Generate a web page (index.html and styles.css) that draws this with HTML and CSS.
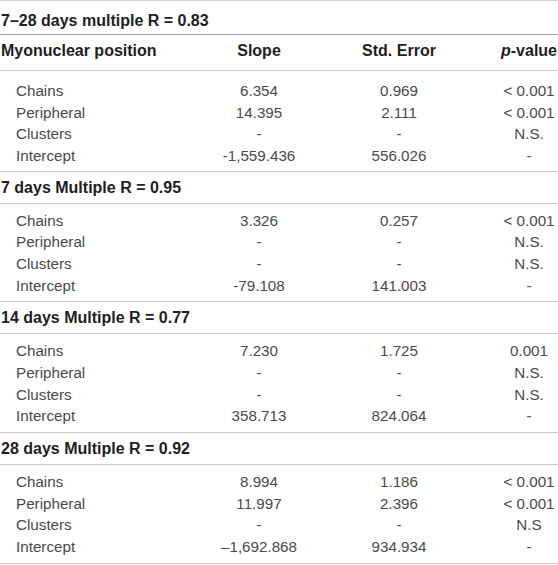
FILE: index.html
```html
<!DOCTYPE html>
<html>
<head>
<meta charset="utf-8">
<link rel="stylesheet" href="styles.css">
</head>
<body>
<div class="tbl">
  <div class="title first">7–28 days multiple R = 0.83</div>
  <div class="head">
    <span class="c1">Myonuclear position</span>
    <span>Slope</span>
    <span>Std. Error</span>
    <span><i>p</i>-value</span>
  </div>
  <div class="block b1">
    <div class="row"><span class="c1">Chains</span><span>6.354</span><span>0.969</span><span>&lt; 0.001</span></div>
    <div class="row"><span class="c1">Peripheral</span><span>14.395</span><span>2.111</span><span>&lt; 0.001</span></div>
    <div class="row"><span class="c1">Clusters</span><span>-</span><span>-</span><span>N.S.</span></div>
    <div class="row"><span class="c1">Intercept</span><span>-1,559.436</span><span>556.026</span><span>-</span></div>
  </div>
  <div class="title">7 days Multiple R = 0.95</div>
  <div class="block">
    <div class="row"><span class="c1">Chains</span><span>3.326</span><span>0.257</span><span>&lt; 0.001</span></div>
    <div class="row"><span class="c1">Peripheral</span><span>-</span><span>-</span><span>N.S.</span></div>
    <div class="row"><span class="c1">Clusters</span><span>-</span><span>-</span><span>N.S.</span></div>
    <div class="row"><span class="c1">Intercept</span><span>-79.108</span><span>141.003</span><span>-</span></div>
  </div>
  <div class="title">14 days Multiple R = 0.77</div>
  <div class="block">
    <div class="row"><span class="c1">Chains</span><span>7.230</span><span>1.725</span><span>0.001</span></div>
    <div class="row"><span class="c1">Peripheral</span><span>-</span><span>-</span><span>N.S.</span></div>
    <div class="row"><span class="c1">Clusters</span><span>-</span><span>-</span><span>N.S.</span></div>
    <div class="row"><span class="c1">Intercept</span><span>358.713</span><span>824.064</span><span>-</span></div>
  </div>
  <div class="title">28 days Multiple R = 0.92</div>
  <div class="block last">
    <div class="row"><span class="c1">Chains</span><span>8.994</span><span>1.186</span><span>&lt; 0.001</span></div>
    <div class="row"><span class="c1">Peripheral</span><span>11.997</span><span>2.396</span><span>&lt; 0.001</span></div>
    <div class="row"><span class="c1">Clusters</span><span>-</span><span>-</span><span>N.S</span></div>
    <div class="row"><span class="c1">Intercept</span><span>–1,692.868</span><span>934.934</span><span>-</span></div>
  </div>
</div>
</body>
</html>
```
FILE: styles.css
```css
html, body {
  margin: 0;
  padding: 0;
  background: #ffffff;
}
.tbl {
  width: 558px;
  font-family: "Liberation Sans", Arial, Helvetica, sans-serif;
  color: #4a4a4a;
  border-top: 1px solid #cfcfcf;
}
.title {
  font-weight: bold;
  font-size: 16px;
  line-height: 18px;
  color: #1e1e1e;
  padding: 7px 0 6px 1px;
  border-bottom: 1px solid #c8c8c8;
}
.title.first {
  padding-top: 11px;
  padding-bottom: 4px;
  border-bottom-color: #a8a8a8;
}
.head, .row {
  display: grid;
  grid-template-columns: 220px 78px 202px 58px;
}
.head > span, .row > span {
  text-align: center;
  white-space: nowrap;
}
.head > .c1, .row > .c1 {
  text-align: left;
}
.head {
  font-weight: bold;
  font-size: 16px;
  line-height: 18px;
  color: #1e1e1e;
  padding: 7px 0 10px 0;
  border-bottom: 1px solid #c8c8c8;
}
.head > .c1 {
  padding-left: 1px;
}
.block {
  padding: 6px 0 5px 0;
  border-bottom: 1px solid #c8c8c8;
}
.block.b1 {
  padding-top: 9px;
  padding-bottom: 4px;
}
.row {
  font-size: 15.2px;
  line-height: 21.67px;
}
.row > .c1 {
  padding-left: 16px;
}
```
